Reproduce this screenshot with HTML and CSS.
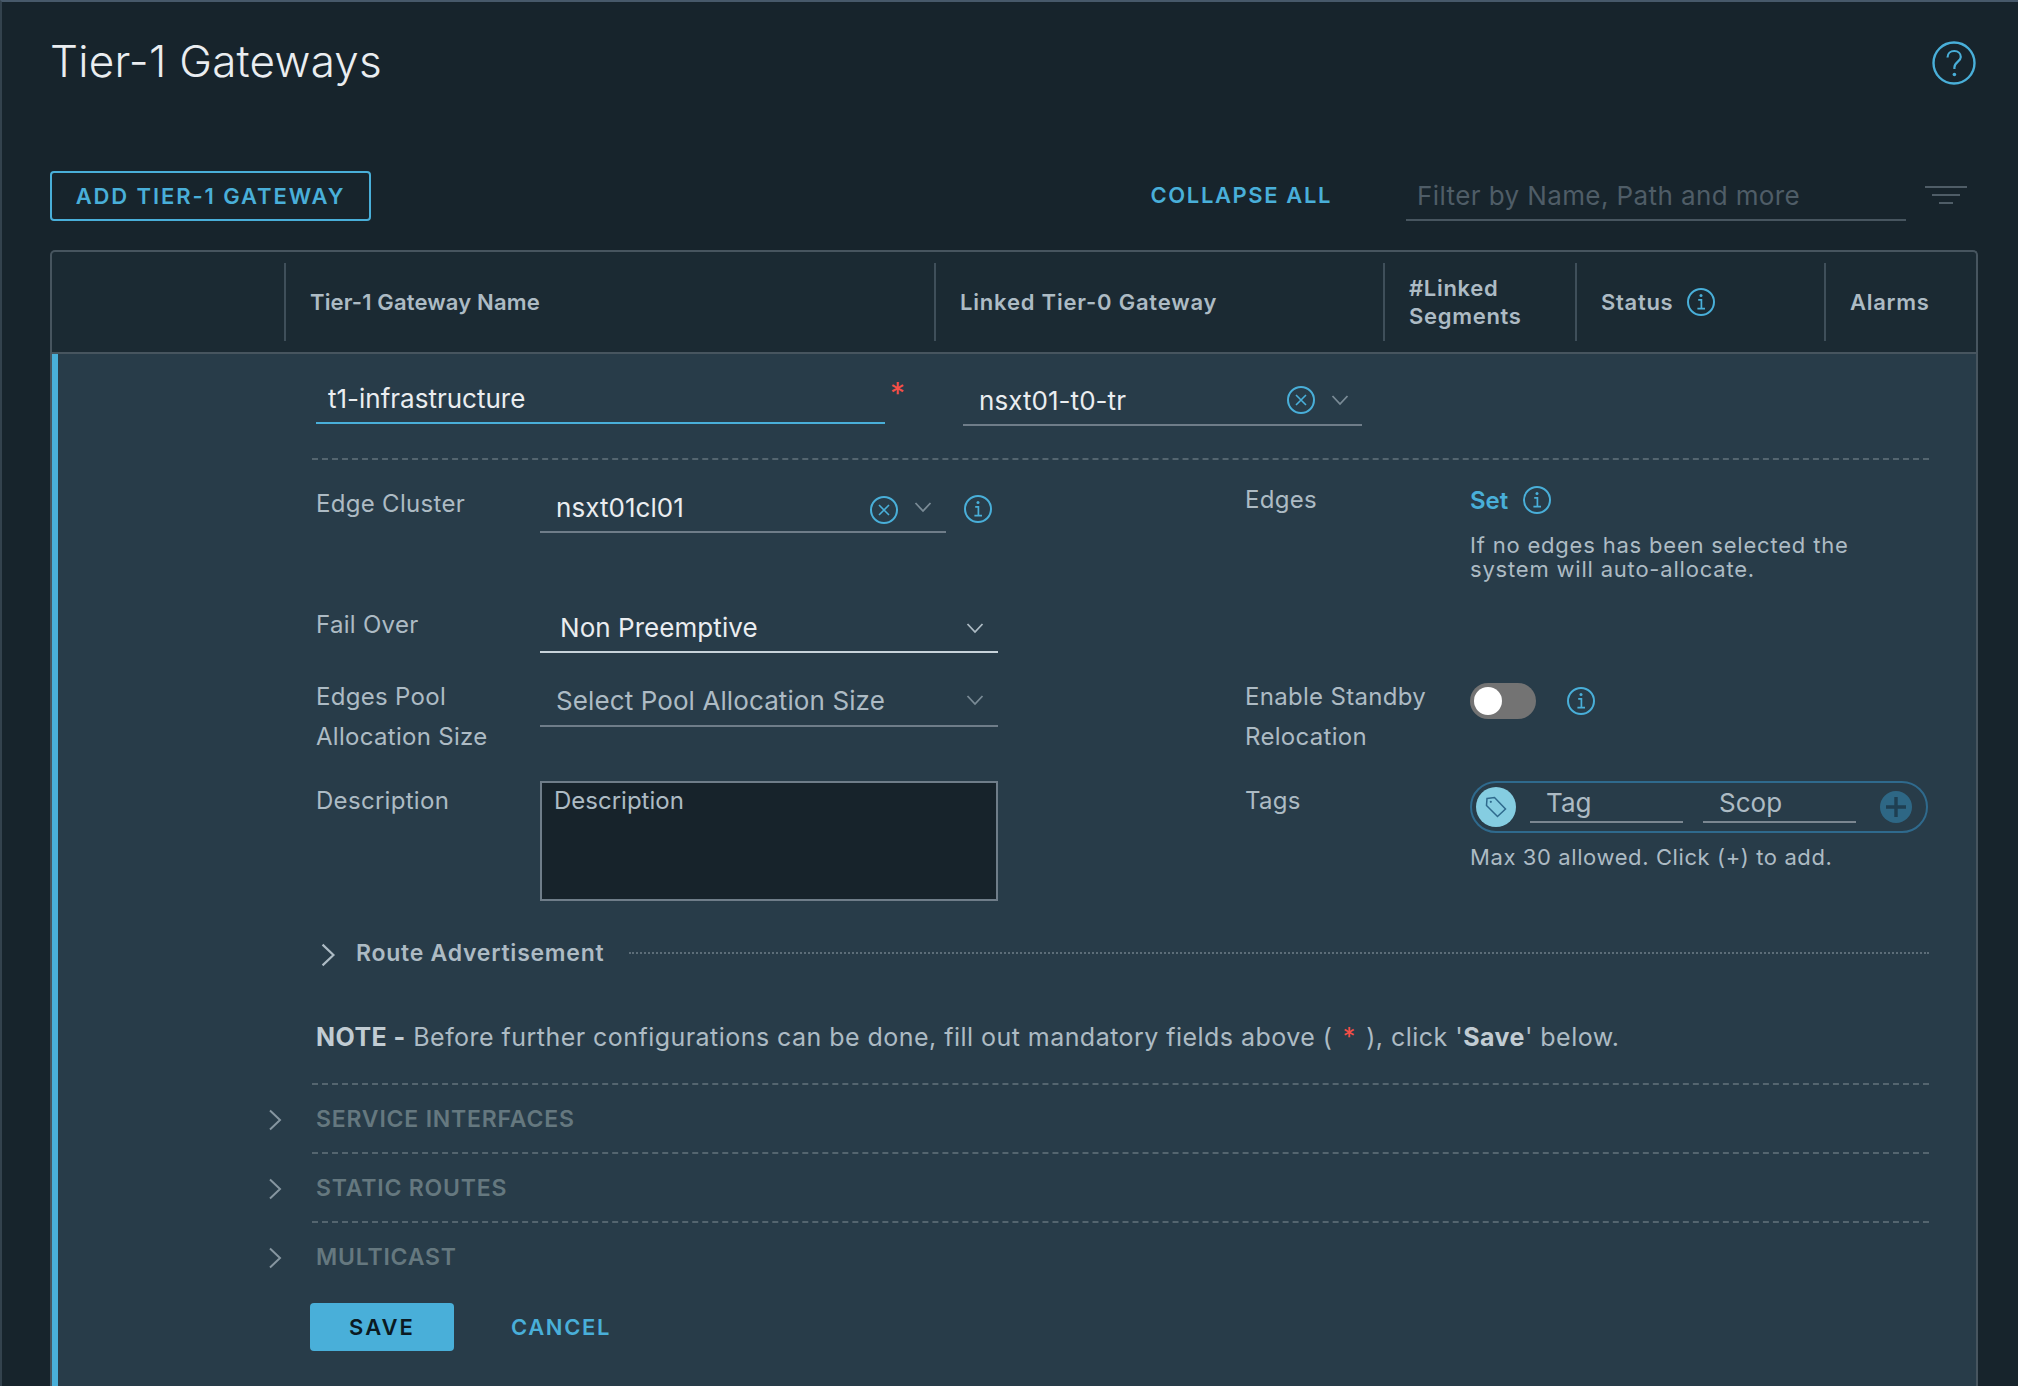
FILE: index.html
```html
<!DOCTYPE html>
<html lang="en">
<head>
<meta charset="utf-8">
<title>Tier-1 Gateways</title>
<link rel="stylesheet" href="styles.css">
</head>
<body>
<svg class="defs" width="0" height="0" aria-hidden="true">
  <symbol id="i-info" viewBox="0 0 28 28">
    <circle cx="14" cy="14" r="13" fill="none" stroke="currentColor" stroke-width="2"/>
    <circle cx="14" cy="7.6" r="1.5" fill="currentColor"/>
    <path d="M11.2 11.8H14.4V20.4M10.4 20.6H18" fill="none" stroke="currentColor" stroke-width="1.7"/>
  </symbol>
  <symbol id="i-x" viewBox="0 0 28 28">
    <circle cx="14" cy="14" r="13" fill="none" stroke="currentColor" stroke-width="2"/>
    <path d="M9 9L19 19M19 9L9 19" fill="none" stroke="currentColor" stroke-width="1.6"/>
  </symbol>
  <symbol id="i-down" viewBox="0 0 18 12">
    <path d="M1.5 2L9 10L16.5 2" fill="none" stroke="currentColor" stroke-width="1.8"/>
  </symbol>
  <symbol id="i-right" viewBox="0 0 16 22">
    <path d="M3 1.5L13 11L3 20.5" fill="none" stroke="currentColor" stroke-width="2"/>
  </symbol>
</svg>

<div class="page">
  <header class="title-row">
    <h1 class="title">Tier-1 Gateways</h1>
    <svg class="help" viewBox="0 0 44 44">
      <circle cx="22" cy="22" r="20.5" fill="none" stroke="currentColor" stroke-width="2.4"/>
      <path d="M15.5 16.5C15.5 12.5 18.5 10 22.3 10C26 10 28.8 12.5 28.8 16C28.8 20.5 22.4 21 22.4 26.5V28" fill="none" stroke="currentColor" stroke-width="2.2"/>
      <circle cx="22.4" cy="33.5" r="1.8" fill="currentColor"/>
    </svg>
  </header>

  <div class="toolbar">
    <button class="btn-outline">ADD TIER-1 GATEWAY</button>
    <span class="collapse">COLLAPSE ALL</span>
    <div class="filter">Filter by Name, Path and more</div>
    <div class="filter-icon"><i class="l1"></i><i class="l2"></i><i class="l3"></i></div>
  </div>

  <section class="table">
    <div class="thead">
      <div class="th"></div>
      <div class="th sep th-name">Tier-1 Gateway Name</div>
      <div class="th sep th-linked">Linked Tier-0 Gateway</div>
      <div class="th sep two">#Linked<br>Segments</div>
      <div class="th sep">Status<svg class="ico ico-status"><use href="#i-info"/></svg></div>
      <div class="th sep">Alarms</div>
    </div>

    <div class="row">
      <div class="row-top">
        <div class="name-input">t1-infrastructure</div>
        <span class="required">*</span>
        <div class="linked-select">
          <span class="val grow">nsxt01-t0-tr</span>
          <svg class="ico"><use href="#i-x"/></svg>
          <svg class="chev chev-dim"><use href="#i-down"/></svg>
        </div>
      </div>

      <div class="form">
        <div class="field f-edge">
          <div class="label">Edge Cluster</div>
          <div class="ctl-line">
            <div class="select s-cluster">
              <span class="val grow">nsxt01cl01</span>
              <svg class="ico"><use href="#i-x"/></svg>
              <svg class="chev chev-dim"><use href="#i-down"/></svg>
            </div>
            <svg class="ico ico-after"><use href="#i-info"/></svg>
          </div>
        </div>

        <div class="field f-edges">
          <div class="label">Edges</div>
          <div>
            <div class="set-line"><span class="set">Set</span><svg class="ico"><use href="#i-info"/></svg></div>
            <p class="hint">If no edges has been selected the<br>system will auto-allocate.</p>
          </div>
        </div>

        <div class="field f-failover">
          <div class="label">Fail Over</div>
          <div class="select s-failover">
            <span class="val grow">Non Preemptive</span>
            <svg class="chev"><use href="#i-down"/></svg>
          </div>
        </div>

        <div class="field f-pool">
          <div class="label">Edges Pool<br>Allocation Size</div>
          <div class="select s-pool">
            <span class="ph grow">Select Pool Allocation Size</span>
            <svg class="chev chev-dim"><use href="#i-down"/></svg>
          </div>
        </div>

        <div class="field f-standby">
          <div class="label">Enable Standby<br>Relocation</div>
          <div class="toggle-line">
            <div class="toggle"><span class="knob"></span></div>
            <svg class="ico"><use href="#i-info"/></svg>
          </div>
        </div>

        <div class="field f-desc">
          <div class="label">Description</div>
          <div class="textarea">Description</div>
        </div>

        <div class="field f-tags">
          <div class="label">Tags</div>
          <div>
            <div class="tagbox">
              <span class="tag-badge">
                <svg viewBox="0 0 24 24" class="tag-svg"><path d="M3 3.5L10.5 2.5L21.5 14L13.5 21.5L2.5 10.5Z" fill="none" stroke="currentColor" stroke-width="1.5"/><circle cx="6.8" cy="6.8" r="1.1" fill="currentColor"/></svg>
              </span>
              <span class="tag-input">Tag</span>
              <span class="tag-input">Scop</span>
              <span class="tag-add">
                <svg viewBox="0 0 32 32"><path d="M16 6V26M6 16H26" fill="none" stroke="currentColor" stroke-width="3.4"/></svg>
              </span>
            </div>
            <p class="tag-hint">Max 30 allowed. Click (+) to add.</p>
          </div>
        </div>
      </div>

      <div class="route">
        <svg class="arrow arrow-route"><use href="#i-right"/></svg>
        <span class="route-title">Route Advertisement</span>
        <span class="route-dots"></span>
      </div>

      <p class="note"><b>NOTE -</b> Before further configurations can be done, fill out mandatory fields above ( <span class="star">*</span> ), click '<b>Save</b>' below.</p>

      <div class="section"><svg class="arrow"><use href="#i-right"/></svg><span>SERVICE INTERFACES</span></div>
      <div class="section"><svg class="arrow"><use href="#i-right"/></svg><span>STATIC ROUTES</span></div>
      <div class="section"><svg class="arrow"><use href="#i-right"/></svg><span>MULTICAST</span></div>

      <div class="actions">
        <button class="btn-save">SAVE</button>
        <span class="cancel">CANCEL</span>
      </div>
    </div>
  </section>
</div>
</body>
</html>
```
FILE: styles.css
```css
* { box-sizing: border-box; }
html, body { margin: 0; height: 1386px; overflow: hidden; background: #17242c; }
body { font-family: Inter, "Noto Sans", sans-serif; color: #adbbc4; }
.defs { position: absolute; }
p, h1 { margin: 0; }

.page {
  height: 1386px;
  overflow: hidden;
  border-top: 2px solid #47596a;
  border-left: 2px solid #33424d;
  padding: 0 40px 0 48px;
}

.title-row { height: 120px; display: flex; align-items: center; justify-content: space-between; }
.title { font-size: 44px; font-weight: 300; color: #eaedf0; letter-spacing: 0.25px; margin-top: -2px; }
.help { width: 44px; height: 44px; color: #49afd9; margin: 2px 2px 0 0; }

.toolbar { margin-top: 49px; height: 50px; display: flex; align-items: center; }
.btn-outline {
  width: 321px; height: 50px;
  border: 2px solid #49afd9; border-radius: 4px;
  background: transparent; color: #49afd9;
  font: 600 22px Inter, sans-serif; letter-spacing: 1.9px;
  padding: 0;
}
.collapse { margin-left: auto; margin-top: -2px; color: #49afd9; font-size: 22px; font-weight: 600; letter-spacing: 1.6px; }
.filter {
  margin-left: 74px; width: 500px; height: 50px;
  border-bottom: 2px solid #47555f;
  padding: 1px 0 0 11px;
  font-size: 26px; line-height: 48px; color: #4f5d67; letter-spacing: 0.4px;
}
.filter-icon { margin-left: 19px; width: 42px; margin-top: -2px; margin-right: 11px; display: flex; flex-direction: column; align-items: center; gap: 6px; }
.filter-icon i { display: block; height: 2px; background: #4f5d67; }
.filter-icon .l1 { width: 42px; }
.filter-icon .l2 { width: 28px; }
.filter-icon .l3 { width: 14px; }

.table {
  margin-top: 29px;
  height: 1200px;
  border: 2px solid #47555f;
  border-bottom: 0;
  border-radius: 5px 5px 0 0;
  background: #1b2a33;
}
.thead {
  height: 102px;
  border-bottom: 2px solid #47555f;
  display: grid;
  grid-template-columns: 232px 650px 449px 192px 249px 1fr;
  align-items: center;
}
.th {
  height: 78px;
  display: flex; align-items: center;
  font-size: 22px; font-weight: 600; color: #adbbc4; letter-spacing: 0.7px;
}
.th-name { letter-spacing: 0.15px; }
.th-linked { letter-spacing: 0.8px; }
.sep { border-left: 2px solid #3f4f5a; padding-left: 24px; }
.two { line-height: 28px; }
.ico { width: 28px; height: 28px; color: #49afd9; flex: none; }
.ico-status { margin-left: 14px; }

.row { height: 1098px; background: #283c49; border-left: 6px solid #49afd9; }
.val { color: #eaedf0; font-size: 26px; letter-spacing: 0.05px; }
.ph { color: #adbbc4; font-size: 26px; letter-spacing: 0.1px; }
.grow { flex: 1; }
.chev { width: 18px; height: 12px; color: #adbbc4; flex: none; }
.chev-dim { color: #7a8b96; }

.row-top {
  height: 106px; margin: 0 47px 0 254px; padding: 22px 0 0 4px;
  border-bottom: 2px dashed #54656f;
  display: flex; align-items: flex-start;
}
.name-input {
  width: 569px; height: 48px;
  border-bottom: 2px solid #49afd9;
  padding-left: 12px;
  font-size: 26px; line-height: 46px; color: #eaedf0;
}
.required { width: 78px; padding-left: 5px; margin-top: 2px; color: #f54f47; font-size: 30px; line-height: 30px; }
.linked-select {
  width: 399px; height: 48px; margin-top: 2px;
  border-bottom: 2px solid #6f7d89;
  padding: 0 13px 2px 16px;
  display: flex; align-items: center; gap: 16px;
}

.form {
  height: 465px;
  margin-left: 258px; padding-right: 47px;
  display: grid;
  grid-template-columns: 929px 1fr;
  grid-template-rows: 140px 70px 105px 1fr;
}
.field { display: grid; grid-template-columns: 224px 1fr; align-items: start; }
.label { font-size: 24px; line-height: 40px; color: #adbbc4; letter-spacing: 0.3px; }

.f-edge { grid-column: 1; grid-row: 1; padding-top: 24px; }
.f-edges { grid-column: 2; grid-row: 1 / span 2; padding-top: 20px; grid-template-columns: 225px 1fr; }
.f-failover { grid-column: 1; grid-row: 2; padding-top: 5px; }
.f-pool { grid-column: 1; grid-row: 3; padding-top: 7px; }
.f-standby { grid-column: 2; grid-row: 3; padding-top: 7px; grid-template-columns: 225px 1fr; }
.f-desc { grid-column: 1; grid-row: 4; padding-top: 6px; }
.f-tags { grid-column: 2; grid-row: 4; padding-top: 6px; grid-template-columns: 225px 1fr; }

.ctl-line { display: flex; align-items: center; margin-top: 1px; }
.select { display: flex; align-items: center; border-bottom: 2px solid #6f7d89; height: 48px; }
.s-cluster { width: 406px; padding: 0 14px 2px 16px; gap: 16px; }
.s-cluster .ico { margin-top: 5px; }
.ico-after { margin: 0 0 0 19px; transform: translateX(-1px); }
.s-failover { width: 458px; height: 49px; margin-top: -1px; padding: 0 14px 0 20px; border-bottom-color: #c8d3da; }
.s-pool { width: 458px; height: 50px; padding: 0 14px 2px 16px; }

.set-line { display: flex; align-items: center; height: 40px; gap: 15px; }
.set { color: #49afd9; font-size: 24px; font-weight: 600; }
.hint { margin-top: 14px; font-size: 22px; line-height: 23.5px; letter-spacing: 0.8px; color: #adbbc4; }

.toggle-line { display: flex; align-items: center; height: 36px; margin-top: 6px; gap: 31px; }
.toggle { width: 66px; height: 36px; border-radius: 18px; background: #737373; padding: 4px; }
.knob { display: block; width: 28px; height: 28px; border-radius: 50%; background: #fff; }

.textarea {
  width: 458px; height: 120px;
  border: 2px solid #6f7d89;
  background: #17232b;
  padding: 0 12px;
  font-size: 24px; line-height: 36px; color: #adbbc4;
}

.tagbox {
  width: 458px; height: 52px;
  border: 2px solid #2f6a8d; border-radius: 26px;
  display: flex; align-items: center;
  padding: 0 14px 0 4px;
}
.tag-badge { width: 40px; height: 40px; border-radius: 50%; background: #85cde1; flex: none; color: #2f6a8d; display: flex; align-items: center; justify-content: center; }
.tag-svg { width: 24px; height: 24px; }
.tag-input {
  width: 153px; height: 38px; margin: -6px 0 0 14px;
  border-bottom: 2px solid #7b8791;
  padding: 2px 0 0 16px;
  font-size: 26px; line-height: 32px; color: #adbbc4;
}
.tag-input + .tag-input { margin-left: 20px; }
.tag-add { width: 32px; height: 32px; border-radius: 50%; background: #2e6785; color: #1f3f52; margin-left: auto; flex: none; }
.tag-add svg { display: block; width: 32px; height: 32px; }
.tag-hint { margin-top: 11px; font-size: 22px; line-height: 26px; letter-spacing: 0.6px; color: #adbbc4; }

.route { height: 56px; margin-left: 258px; padding-right: 47px; display: flex; align-items: center; }
.arrow { width: 16px; height: 22px; color: #7a8b96; flex: none; }
.arrow-route { margin-left: 3px; width: 18px; height: 24px; color: #adbbc4; margin-top: 4px; }
.route-title { margin-left: 19px; font-size: 23px; font-weight: 600; color: #adbbc4; letter-spacing: 0.75px; }
.route-dots { flex: 1; margin-left: 25px; border-top: 2px dotted #5c6d78; }

.note { margin-left: 258px; height: 102px; padding-top: 36px; font-size: 25px; line-height: 40px; color: #adbbc4; letter-spacing: 0.46px; }
.note b { font-weight: 700; color: #c1ccd3; }
.star { color: #f54f47; margin: 0 3px; }

.section {
  margin: 0 47px 0 254px; height: 69px;
  border-top: 2px dashed #54656f;
  padding-left: 4px;
  display: flex; align-items: center;
  font-size: 23px; font-weight: 600; color: #65787f; letter-spacing: 0.8px;
}
.section .arrow { margin-left: -49px; margin-right: 33px; margin-top: 2px; color: #8696a0; }

.actions { margin: 13px 0 0 252px; display: flex; align-items: center; }
.btn-save {
  width: 144px; height: 48px; border: 0; border-radius: 4px;
  background: #49afd9; color: #0b1a22; padding: 0;
  font: 600 22px Inter, sans-serif; letter-spacing: 2px;
}
.cancel { margin-left: 57px; color: #49afd9; font-size: 22px; font-weight: 600; letter-spacing: 1.6px; }
```
